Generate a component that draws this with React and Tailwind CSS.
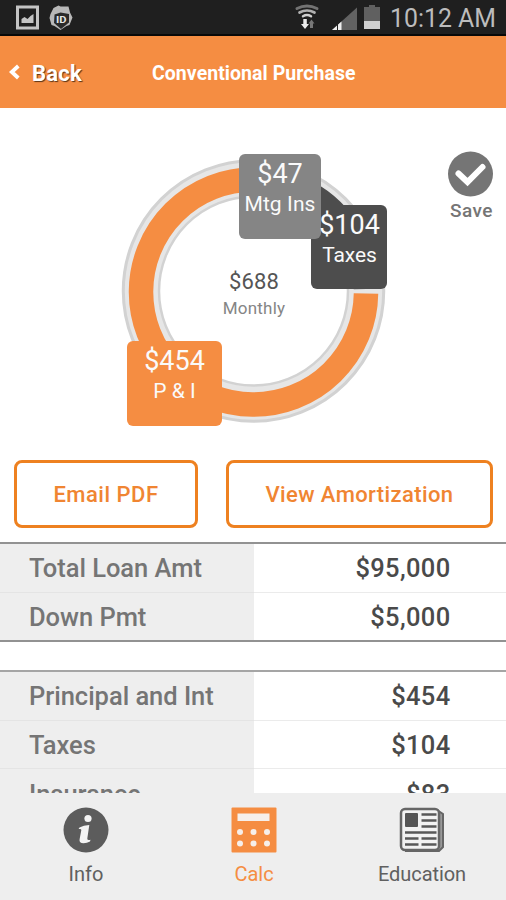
const font = { fontFamily: 'Roboto, "Liberation Sans", sans-serif' };

function StatusBar() {
  return (
    <div className="h-[36px] shrink-0 border-b-2 border-[#080808] bg-[#1f1f1f]">
      <svg className="block" width="506" height="34" viewBox="0 0 506 34">
        <path d="M17.500 7h20v21h-20z" fill="none" stroke="#c4c4c4" strokeWidth="3" />
        <path d="M21.500 23v-4l3-2 3 2 3-3 3-2v9z" fill="#c4c4c4" />
        <path d="M50.500 14l3-6 5-2.500 2 1 8 0 1.500 6 2.500 5-3 7.500-3 1-6 4-6-4-3-1-2-7z" fill="#b8b8b8" />
        <path d="M54.500 14.500l6-2 8.500 1.500v8.500l-8 6.500-7-6z" fill="#2a2a2a" />
        <text x="56" y="22.500" fontSize="9.500" fontWeight="700" fill="#e6e6e6" textLength="10.500" lengthAdjust="spacingAndGlyphs">ID</text>
        <g fill="none" strokeLinecap="round">
          <path d="M297 8.500q10-5 20 0" stroke="#737373" strokeWidth="3" />
          <path d="M299.500 12.500q7.500-4 15 0" stroke="#b0b0b0" strokeWidth="2.700" />
          <path d="M303 16.300q4-2.500 8 0" stroke="#d0d0d0" strokeWidth="2.500" />
        </g>
        <path d="M303.300 19h3.500v5h2.200l-4 5-4-5h2.300z" fill="#ececec" />
        <path d="M310 28v-4.500h-1.500l3-4 3 4h-1.500v4.500z" fill="#777" />
        <path d="M332 30L357 7.500V30z" fill="#626262" />
        <path d="M332 30L341.500 21.500V30z" fill="#eee" />
        <path d="M337.500 24v7" stroke="#1f1f1f" strokeWidth="1" />
        <path d="M364 7h5V5h6v2h5v22h-16z" fill="#606060" />
        <path d="M364 21h16v8h-16z" fill="#cfcfcf" />
        <text x="390" y="26.500" fontSize="26" fill="#bcbcbc" textLength="106" lengthAdjust="spacingAndGlyphs">10:12 AM</text>
      </svg>
    </div>
  );
}

function Header() {
  return (
    <header className="flex h-[72px] shrink-0 items-center bg-[#f58d42] text-white">
      <svg className="ml-[8px]" width="12" height="18" viewBox="0 0 12 18">
        <path d="M10.300 3L3.800 9l6.500 6" fill="none" stroke="#fff" strokeWidth="3.800" />
      </svg>
      <span className="ml-[12px] mt-[2px] w-[120px] text-[22px] font-bold tracking-[0.2px] [text-shadow:1px_1px_1px_#5b3418]">Back</span>
      <h1 className="mt-[3px] whitespace-nowrap text-[19.500px] font-bold tracking-[0.05px]">Conventional Purchase</h1>
    </header>
  );
}

function Tag({ className, amount, label, labelClass }) {
  return (
    <div className={'absolute flex flex-col items-center whitespace-nowrap rounded-[6px] text-[#fafafa] ' + className}>
      <span className="mt-[3.500px] text-[27px] leading-[32px]">{amount}</span>
      <span className={'text-[21px] leading-[28.500px] ' + labelClass}>{label}</span>
    </div>
  );
}

function Summary() {
  return (
    <section className="relative h-[352px] shrink-0">
      <svg className="block" width="506" height="340" viewBox="0 108 506 340">
        <g fill="none">
          <circle cx="253.500" cy="291" r="112.500" stroke="#d2d2d2" strokeWidth="38.500" />
          <circle cx="253.500" cy="291" r="112.200" stroke="#e6e6e6" strokeWidth="33" />
          <path d="M366 293.500A112.500 112.500 0 1 1 253.500 179.500" stroke="#f58d42" strokeWidth="24.500" />
          <path d="M253.500 179.500A112.500 112.500 0 0 1 300 189" stroke="#858585" strokeWidth="24.500" />
          <path d="M300 189A112.500 112.500 0 0 1 366 289" stroke="#4d4d4d" strokeWidth="24.500" />
        </g>
      </svg>
      <div className="absolute left-[311px] top-[97px] h-[84px] w-[76px] rounded-[6px] bg-[#4d4d4d]" />
      <Tag className="left-[239px] top-[46px] h-[85px] w-[82px] bg-[#858585]" amount="$47" label="Mtg Ins" labelClass="tracking-[0.1px]" />
      <Tag className="left-[312px] top-[97px] h-[84px] w-[75px]" amount="$104" label="Taxes" labelClass="tracking-[-0.1px]" />
      <Tag className="left-[127px] top-[233px] h-[85px] w-[95px] bg-[#f58d42]" amount="$454" label="P & I" labelClass="tracking-[0px]" />
      <div className="absolute left-[204px] top-[160px] flex w-[100px] flex-col items-center">
        <span className="text-[22px] leading-[27px] tracking-[0.1px] text-[#555]">$688</span>
        <span className="text-[17px] leading-[26px] tracking-[0.2px] text-[#858585]">Monthly</span>
      </div>
      <div className="absolute left-[441px] top-[43px] flex w-[60px] flex-col items-center">
        <svg width="46" height="46" viewBox="0 0 46 46">
          <circle cx="22.500" cy="23" r="22.500" fill="#757575" />
          <path d="M10.500 22.500L19.500 31L34.500 16" fill="none" stroke="#fff" strokeWidth="6" strokeLinecap="round" />
        </svg>
        <span className="ml-[1px] mt-[2px] text-[19px] font-medium leading-[24px] tracking-[0.5px] text-[#757575]">Save</span>
      </div>
    </section>
  );
}

function Row({ label, value }) {
  return (
    <div className="group flex h-[48.500px] shrink-0">
      <div className="flex w-[253.500px] items-center border-b border-[#e4e4e4] bg-[#eee] pl-[29px] pt-px tracking-[-0.03px] text-[#757575] group-last:border-b-0">{label}</div>
      <div className="flex flex-1 items-center justify-end border-b border-[#ebebeb] pr-[55.500px] pt-px tracking-[0.35px] text-[#4a4a4a] group-last:border-b-0">{value}</div>
    </div>
  );
}

function Tab({ label, className, children }) {
  return (
    <div className={'flex flex-1 flex-col items-center pt-[14px] text-[20px] leading-[24px] ' + className}>
      {children}
      <span className="mt-[9px]">{label}</span>
    </div>
  );
}

export default function App() {
  return (
    <div className="flex h-[900px] w-[506px] flex-col overflow-hidden bg-white" style={font}>
      <StatusBar />
      <Header />
      <Summary />
      <div className="flex h-[68px] shrink-0 gap-[28px] pl-[14px] pr-[13px] text-[22px] font-medium text-[#f08532]">
        <button className="w-[184px] rounded-[8px] border-[3px] border-[#ee8120] pt-[1px] tracking-[0.5px]">Email PDF</button>
        <button className="flex-1 rounded-[8px] border-[3px] border-[#ee8120] pt-[1px] tracking-[0.4px]">View Amortization</button>
      </div>
      <div className="mt-[14px] flex h-[100px] shrink-0 flex-col overflow-hidden border-y-2 border-[#929292] text-[25.500px] font-medium">
        <Row label="Total Loan Amt" value="$95,000" />
        <Row label="Down Pmt" value="$5,000" />
      </div>
      <div className="mt-[28px] flex h-[123px] shrink-0 flex-col overflow-hidden border-t-2 border-[#a5a5a5] text-[25.500px] font-medium">
        <Row label="Principal and Int" value="$454" />
        <Row label="Taxes" value="$104" />
        <Row label="Insurance" value="$83" />
      </div>
      <nav className="flex flex-1 bg-[#eee] pl-[2px]">
        <Tab label="Info" className="text-[#606060]">
          <svg width="46" height="46" viewBox="0 0 46 46">
            <circle cx="23" cy="23" r="22.500" fill="#5c5c5c" />
            <circle cx="25" cy="11.500" r="3.600" fill="#f4f4f4" />
            <path d="M16.500 20.500q4-2.500 9.800-2.500L24.300 31.500q-.1 2.300 3.200 1.300l-.5 1.700q-3 1.800-6.500 1.800-4.600 0-3.900-4l1.700-9q.4-1.800-2.700-1.300z" fill="#f4f4f4" />
          </svg>
        </Tab>
        <Tab label="Calc" className="text-[#f58d42]">
          <svg width="46" height="46" viewBox="0 0 46 46">
            <rect x="0.500" y="0.500" width="45" height="45" rx="1" fill="#f58d42" />
            <rect x="6.500" y="6.500" width="32" height="7.500" fill="#f6efea" />
            {[9, 22.500, 36].map((x) => (
              <g key={x} fill="#f6efea">
                <circle cx={x} cy="25" r="3" />
                <circle cx={x} cy="36.500" r="3" />
              </g>
            ))}
          </svg>
        </Tab>
        <Tab label="Education" className="text-[#606060] tracking-[-0.05px]">
          <svg width="46" height="46" viewBox="0 0 46 46">
            <path d="M38 3l6 4v33l-4 4H6" fill="#999" stroke="#666" strokeWidth="2" />
            <rect x="2" y="2" width="38" height="41" rx="4" fill="#f2f2f2" stroke="#666" strokeWidth="2.500" />
            <rect x="6" y="6" width="13" height="14" rx="1" fill="#555" />
            <path d="M22.500 7.500h15M22.500 13.500h15M22.500 19.500h15M6 25.500h31.500M6 31.500h13.500M22.500 31.500h15M6 37.500h13.500M22.500 37.500h15" stroke="#585858" strokeWidth="2.500" />
          </svg>
        </Tab>
      </nav>
    </div>
  );
}
